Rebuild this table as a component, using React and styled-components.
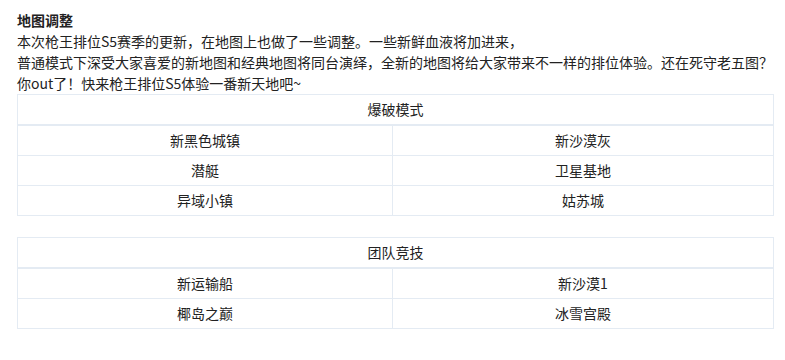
import styled, { createGlobalStyle } from 'styled-components';

const GlobalStyle = createGlobalStyle`
    body {
        margin: 0;
        background: #ffffff;
        font-family: "Noto Sans CJK SC", "Liberation Sans", sans-serif;
        color: #222222;
    }
`

const modes = [
    {
        name: "爆破模式",
        maps: [["新黑色城镇", "新沙漠灰"], ["潜艇", "卫星基地"], ["异域小镇", "姑苏城"]]
    },
    {
        name: "团队竞技",
        maps: [["新运输船", "新沙漠1"], ["椰岛之巅", "冰雪宫殿"]]
    }
];

export default function App() {
    return (
        <Page>
            <GlobalStyle />
            <Title>地图调整</Title>
            <Text>
                本次枪王排位S5赛季的更新，在地图上也做了一些调整。一些新鲜血液将加进来，<br />
                普通模式下深受大家喜爱的新地图和经典地图将同台演绎，全新的地图将给大家带来不一样的排位体验。还在死守老五图？<br />
                你out了！快来枪王排位S5体验一番新天地吧~
            </Text>
            {modes.map((mode) => (
                <MapTable key={mode.name}>
                    <Head>{mode.name}</Head>
                    {mode.maps.map((row) => row.map((map) => (
                        <Cell key={map}>{map}</Cell>
                    )))}
                </MapTable>
            ))}
        </Page>
    )
}

const Page = styled.div`
    padding: 10px 0 0 17px;
    width: 757px;
    font-size: 14px;
    line-height: 21px;
`

const Title = styled.div`
    font-weight: bold;
`

const Text = styled.p`
    margin: 0;
    white-space: nowrap;
`

const MapTable = styled.div`
    display: grid;
    grid-template-columns: 375px 381px;
    border-top: 1px solid #e4ebf3;
    border-left: 1px solid #e4ebf3;

    & + & {
        margin-top: 21px;
    }
`

const Head = styled.div`
    grid-column: 1 / 3;
    height: 29px;
    display: flex;
    align-items: center;
    justify-content: center;
    border-right: 1px solid #e4ebf3;
    border-bottom: 2px solid #e4ebf3;
`

const Cell = styled.div`
    height: 29px;
    display: flex;
    align-items: center;
    justify-content: center;
    border-right: 1px solid #e4ebf3;
    border-bottom: 1px solid #e4ebf3;
`
